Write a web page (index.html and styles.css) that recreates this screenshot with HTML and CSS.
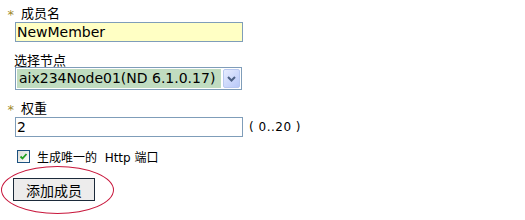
FILE: index.html
```html
<!DOCTYPE html>
<html lang="zh-CN">
<head>
    <meta charset="UTF-8">
    <meta name="viewport" content="width=device-width, initial-scale=1.0">
    <title>添加成员</title>
    <link rel="stylesheet" href="styles.css">
</head>
<body>
    <div class="form">
        <div class="label req"><span class="star">*</span>成员名</div>
        <div class="field">
            <input class="text filled" type="text" value="NewMember">
        </div>

        <div class="label">选择节点</div>
        <div class="field">
            <div class="select">
                <span class="select-value">aix234Node01(ND 6.1.0.17)</span>
                <span class="select-btn">
                    <svg width="9" height="6" viewBox="0 0 9 6"><path d="M1 1 L4.5 4.5 L8 1" fill="none" stroke="#4d6185" stroke-width="2"/></svg>
                </span>
            </div>
        </div>

        <div class="label req"><span class="star">*</span>权重</div>
        <div class="field">
            <input class="text" type="text" value="2">
            <span class="range">( 0..20 )</span>
        </div>

        <div class="check-row">
            <span class="box">
                <svg width="9" height="9" viewBox="0 0 9 9"><path d="M1.5 4.5 L3.5 6.5 L7.5 2" fill="none" stroke="#21a121" stroke-width="1.8"/></svg>
            </span>
            <span>生成唯一的 &nbsp;Http 端口</span>
        </div>

        <div class="actions">
            <button class="btn">添加成员</button>
            <div class="mark"></div>
        </div>
    </div>
</body>
</html>
```

FILE: styles.css
```css
    body {
        margin: 0;
        background-color: white;
        font-family: "DejaVu Sans", "Noto Sans CJK SC", sans-serif;
        font-size: 12px;
        color: black;
    }

    .form {
        padding: 5px 0 0 14px;
    }

    .label {
        height: 17px;
        line-height: 15px;
        font-family: "Noto Sans CJK SC", sans-serif;
        font-size: 13px;
    }

    .req {
        margin-left: -14px;
    }

    .star {
        display: inline-block;
        box-sizing: border-box;
        width: 21px;
        padding-right: 7px;
        text-align: right;
        color: #a08a28;
        font-family: "DejaVu Sans", sans-serif;
        font-size: 13px;
        vertical-align: -1px;
    }

    .field {
        display: flex;
        align-items: center;
        margin-bottom: 10px;
        padding-left: 1px;
    }

    .text {
        box-sizing: border-box;
        width: 228px;
        height: 20px;
        margin: 0;
        padding: 0 1px;
        border: 1px solid #7f9db9;
        font-family: "DejaVu Sans", sans-serif;
        font-size: 14px;
        color: black;
        outline: none;
    }

    .filled {
        background-color: #ffffc4;
    }

    .select {
        box-sizing: border-box;
        width: 227px;
        height: 23px;
        display: flex;
        align-items: center;
        border: 1px solid #7f9db9;
        padding: 1px;
        margin-top: -2px;
    }

    .select-value {
        flex: 1;
        height: 100%;
        line-height: 19px;
        padding-left: 2px;
        background-color: #c0dcc0;
        font-size: 14px;
        white-space: nowrap;
        overflow: hidden;
    }

    .select-btn {
        width: 17px;
        height: 19px;
        margin-left: 2px;
        display: flex;
        justify-content: center;
        align-items: center;
        box-sizing: border-box;
        border: 1px solid #b8c8f0;
        border-radius: 2px;
        background: linear-gradient(135deg, #e6ecfe, #b8c8f8);
    }

    .range {
        margin-left: 6px;
        font-size: 12px;
        letter-spacing: 0.5px;
    }

    .check-row {
        display: flex;
        align-items: center;
        gap: 7px;
        margin: 12px 0 0 3px;
        height: 14px;
        font-family: "DejaVu Sans", "Noto Sans CJK SC", sans-serif;
        font-size: 12px;
    }

    .box {
        box-sizing: border-box;
        width: 13px;
        height: 13px;
        border: 1px solid #1c5180;
        background: linear-gradient(135deg, #dcdcd6, #ffffff);
        display: flex;
        justify-content: center;
        align-items: center;
    }

    .actions {
        position: relative;
        margin-top: 15px;
        height: 40px;
    }

    .btn {
        box-sizing: border-box;
        width: 82px;
        height: 23px;
        margin: 0 0 0 -1px;
        padding: 0;
        border: 1px solid #1c2a3a;
        background-color: #edecec;
        font-family: "Noto Sans CJK SC", sans-serif;
        font-size: 14px;
        color: black;
    }

    .mark {
        position: absolute;
        left: -13px;
        top: -12px;
        width: 111px;
        height: 46px;
        border: 1px solid #c8173c;
        border-radius: 50%;
    }
```
